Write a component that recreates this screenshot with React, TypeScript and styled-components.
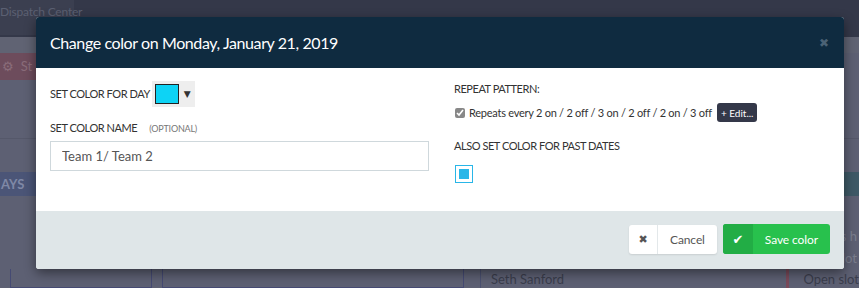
import styled, { createGlobalStyle } from "styled-components";

const GlobalStyle = createGlobalStyle`
  html, body {
    margin: 0;
    padding: 0;
    background: #343849;
    font-family: "Lato", "Liberation Sans", sans-serif;
  }
  * {
    box-sizing: border-box;
  }
`;

const App: React.FC = () => {
  return (
    <>
      <GlobalStyle />
      <StyledPage>
        <StyledTopBar>
          <StyledTab>Dispatch Center</StyledTab>
        </StyledTopBar>
        <StyledBackdrop>
          <StyledLeftSide>
            <StyledBand />
            <StyledToolbar>
              <StyledToolButton>⚙&nbsp;&nbsp;St</StyledToolButton>
            </StyledToolbar>
            <StyledSpacer height={58} />
            <StyledSpacer height={34} lined />
            <StyledPanelHeader color="#4b5577">AYS</StyledPanelHeader>
            <StyledSpacer height={73} />
            <StyledBottomBoxes>
              <StyledGhostBox width={142} />
              <StyledGhostBox width={302} />
            </StyledBottomBoxes>
          </StyledLeftSide>
          <StyledRightSide>
            <StyledBand />
            <StyledSpacer height={85} />
            <StyledSpacer height={34} lined />
            <StyledPanelHeader color="#3e5966" />
            <StyledSpacer height={29} />
            <StyledSlotRow>(s h</StyledSlotRow>
            <StyledSlotRow>lot</StyledSlotRow>
            <StyledPersonRow>
              <span>Seth Sanford</span>
              <StyledRedLine />
              <span>Open slot</span>
            </StyledPersonRow>
          </StyledRightSide>
        </StyledBackdrop>

        <StyledModal>
          <StyledHeader>
            <h2>Change color on Monday, January 21, 2019</h2>
            <StyledClose>✖</StyledClose>
          </StyledHeader>
          <StyledBody>
            <StyledColumn>
              <StyledLabelRow gap={13}>
                <StyledLabel>Set color for day</StyledLabel>
                <StyledPicker>
                  <StyledSwatch color="#0dd3f5" />
                  <StyledCaret>▼</StyledCaret>
                </StyledPicker>
              </StyledLabelRow>
              <StyledLabelRow gap={5}>
                <StyledLabel>Set color name</StyledLabel>
                <StyledHint>(optional)</StyledHint>
              </StyledLabelRow>
              <StyledInput defaultValue="Team 1/ Team 2" />
            </StyledColumn>
            <StyledColumn>
              <StyledLabel>Repeat pattern:</StyledLabel>
              <StyledRepeatRow>
                <StyledCheck type="checkbox" defaultChecked />
                <span>Repeats every 2 on / 2 off / 3 on / 2 off / 2 on / 3 off</span>
                <StyledEditButton>+ Edit...</StyledEditButton>
              </StyledRepeatRow>
              <StyledLabel>Also set color for past dates</StyledLabel>
              <StyledBoxCheck>
                <span />
              </StyledBoxCheck>
            </StyledColumn>
          </StyledBody>
          <StyledFooter>
            <StyledButton variant="default">
              <StyledButtonIcon variant="default">✖</StyledButtonIcon>
              <StyledButtonText>Cancel</StyledButtonText>
            </StyledButton>
            <StyledButton variant="success">
              <StyledButtonIcon variant="success">✔</StyledButtonIcon>
              <StyledButtonText>Save color</StyledButtonText>
            </StyledButton>
          </StyledFooter>
        </StyledModal>
      </StyledPage>
    </>
  );
};

export default App;

const StyledPage = styled.div`
  position: relative;
  width: 859px;
  height: 288px;
  overflow: hidden;
  background: #5d6073;
`;

const StyledTopBar = styled.div`
  height: 37px;
  background: #343849;
  display: flex;
`;

const StyledTab = styled.div`
  width: 74px;
  height: 35px;
  background: #3b3f50;
  color: #5b6072;
  font-size: 12px;
  letter-spacing: -0.2px;
  line-height: 23px;
  white-space: nowrap;
`;

const StyledBackdrop = styled.div`
  display: grid;
  grid-template-columns: 480px 1fr;
  height: 251px;
`;

const StyledLeftSide = styled.div`
  display: flex;
  flex-direction: column;
`;

const StyledRightSide = styled.div`
  display: flex;
  flex-direction: column;
  border-left: 1px solid #4a5070;
`;

const StyledBand = styled.div`
  height: 16px;
  background: #606373;
`;

const StyledToolbar = styled.div`
  height: 27px;
  background: #5d6073;
  display: flex;
`;

const StyledToolButton = styled.div`
  width: 120px;
  background: #6d4c5c;
  color: #8a6c7a;
  font-size: 13px;
  line-height: 27px;
  padding-left: 2px;
`;

const StyledSpacer = styled.div<{ height: number; lined?: boolean }>`
  height: ${(p) => p.height}px;
  border-top: ${(p) => (p.lined ? "1px solid #55586a" : "none")};
`;

const StyledPanelHeader = styled.div<{ color: string }>`
  height: 24px;
  background: ${(p) => p.color};
  color: #7f88a6;
  font-weight: 700;
  font-size: 13px;
  line-height: 24px;
  padding-left: 1px;
`;

const StyledBottomBoxes = styled.div`
  display: flex;
  gap: 10px;
  padding-left: 10px;
  flex: 1;
`;

const StyledGhostBox = styled.div<{ width: number }>`
  width: ${(p) => p.width}px;
  border: 1px solid #454a73;
  border-top: none;
`;

const StyledSlotRow = styled.div`
  height: 22px;
  color: #7b7e8e;
  font-size: 13px;
  line-height: 22px;
  text-align: right;
  padding-right: 2px;
  white-space: nowrap;
`;

const StyledPersonRow = styled.div`
  display: flex;
  align-items: center;
  gap: 14px;
  padding-left: 10px;
  flex: 1;
  color: #3a3d4c;
  font-size: 13px;
  span:first-child {
    flex: 1;
  }
`;

const StyledRedLine = styled.div`
  width: 3px;
  height: 100%;
  background: #7a4a5a;
`;

const StyledModal = styled.div`
  position: absolute;
  top: 17px;
  left: 36px;
  width: 808px;
  border-radius: 3px;
  overflow: hidden;
  background: #fff;
  box-shadow: 0 4px 12px rgba(0, 0, 0, 0.45);
`;

const StyledHeader = styled.div`
  height: 51px;
  background: #0f2b40;
  display: flex;
  align-items: center;
  justify-content: space-between;
  padding: 0 14px;
  h2 {
    margin: 0;
    color: #fff;
    font-size: 16px;
    letter-spacing: -0.4px;
    font-weight: 400;
  }
`;

const StyledClose = styled.span`
  color: #4b6275;
  font-size: 12px;
  font-family: "DejaVu Sans", sans-serif;
  font-weight: 700;
  margin-right: 1px;
`;

const StyledBody = styled.div`
  display: grid;
  grid-template-columns: 1fr 1fr;
  gap: 25px;
  padding: 13px 14px 24px;
  height: 143px;
`;

const StyledColumn = styled.div`
  display: flex;
  flex-direction: column;
  align-items: flex-start;
`;

const StyledLabelRow = styled.div<{ gap: number }>`
  display: flex;
  align-items: center;
  gap: 2px;
  margin-bottom: ${(p) => p.gap}px;
`;

const StyledLabel = styled.div`
  text-transform: uppercase;
  color: #333;
  font-size: 11px;
  letter-spacing: -0.45px;
  line-height: 16px;
`;

const StyledHint = styled.span`
  text-transform: uppercase;
  color: #777;
  font-size: 9px;
  letter-spacing: -0.2px;
  margin-left: 10px;
`;

const StyledPicker = styled.div`
  width: 43px;
  height: 26px;
  background: #eee;
  display: flex;
  align-items: center;
  padding-left: 3px;
  gap: 5px;
`;

const StyledSwatch = styled.span<{ color: string }>`
  width: 24px;
  height: 20px;
  background: ${(p) => p.color};
  border: 1px solid #222;
`;

const StyledCaret = styled.span`
  font-size: 9px;
  color: #333;
  font-family: "DejaVu Sans", sans-serif;
`;

const StyledInput = styled.input`
  width: 379px;
  height: 30px;
  border: 1px solid #cfd8dc;
  padding: 0 11px;
  font-family: inherit;
  font-size: 13px;
  color: #555;
  outline: none;
`;

const StyledRepeatRow = styled.div`
  display: flex;
  align-items: center;
  gap: 4px;
  margin: 6px 0 16px;
  color: #333;
  font-size: 11px;
  letter-spacing: -0.25px;
`;

const StyledCheck = styled.input`
  width: 10px;
  height: 10px;
  margin: 0 0 0 1px;
  accent-color: #888;
`;

const StyledEditButton = styled.button`
  margin-left: 1px;
  height: 19px;
  padding: 0 4px;
  border: none;
  border-radius: 3px;
  background: #343849;
  color: #fff;
  font-family: inherit;
  font-size: 10px;
  letter-spacing: 0;
`;

const StyledBoxCheck = styled.div`
  margin-top: 11px;
  margin-left: 1px;
  width: 18px;
  height: 18px;
  border: 1px solid #29b6e8;
  display: flex;
  align-items: center;
  justify-content: center;
  span {
    width: 10px;
    height: 10px;
    background: #29b6e8;
  }
`;

const StyledFooter = styled.div`
  height: 58px;
  background: #dfe6e8;
  display: flex;
  align-items: center;
  justify-content: flex-end;
  gap: 6px;
  padding: 0 14px 2px;
`;

const StyledButton = styled.div<{ variant: "default" | "success" }>`
  display: flex;
  height: ${(p) => (p.variant === "success" ? 30 : 29)}px;
  border-radius: 3px;
  overflow: hidden;
  background: ${(p) => (p.variant === "success" ? "#28c14d" : "#fff")};
  color: ${(p) => (p.variant === "success" ? "#fff" : "#555")};
  box-shadow: ${(p) => (p.variant === "success" ? "none" : "0 1px 2px rgba(0,0,0,0.1)")};
`;

const StyledButtonIcon = styled.span<{ variant: "default" | "success" }>`
  width: ${(p) => (p.variant === "success" ? 30 : 29)}px;
  display: flex;
  align-items: center;
  justify-content: center;
  font-family: "DejaVu Sans", sans-serif;
  font-size: ${(p) => (p.variant === "success" ? 13 : 11)}px;
  background: ${(p) => (p.variant === "success" ? "#22ad45" : "transparent")};
  border-right: ${(p) => (p.variant === "success" ? "none" : "1px solid #e3e8ea")};
`;

const StyledButtonText = styled.span`
  display: flex;
  align-items: center;
  padding: 0 12px;
  font-size: 12px;
  letter-spacing: -0.1px;
`;
